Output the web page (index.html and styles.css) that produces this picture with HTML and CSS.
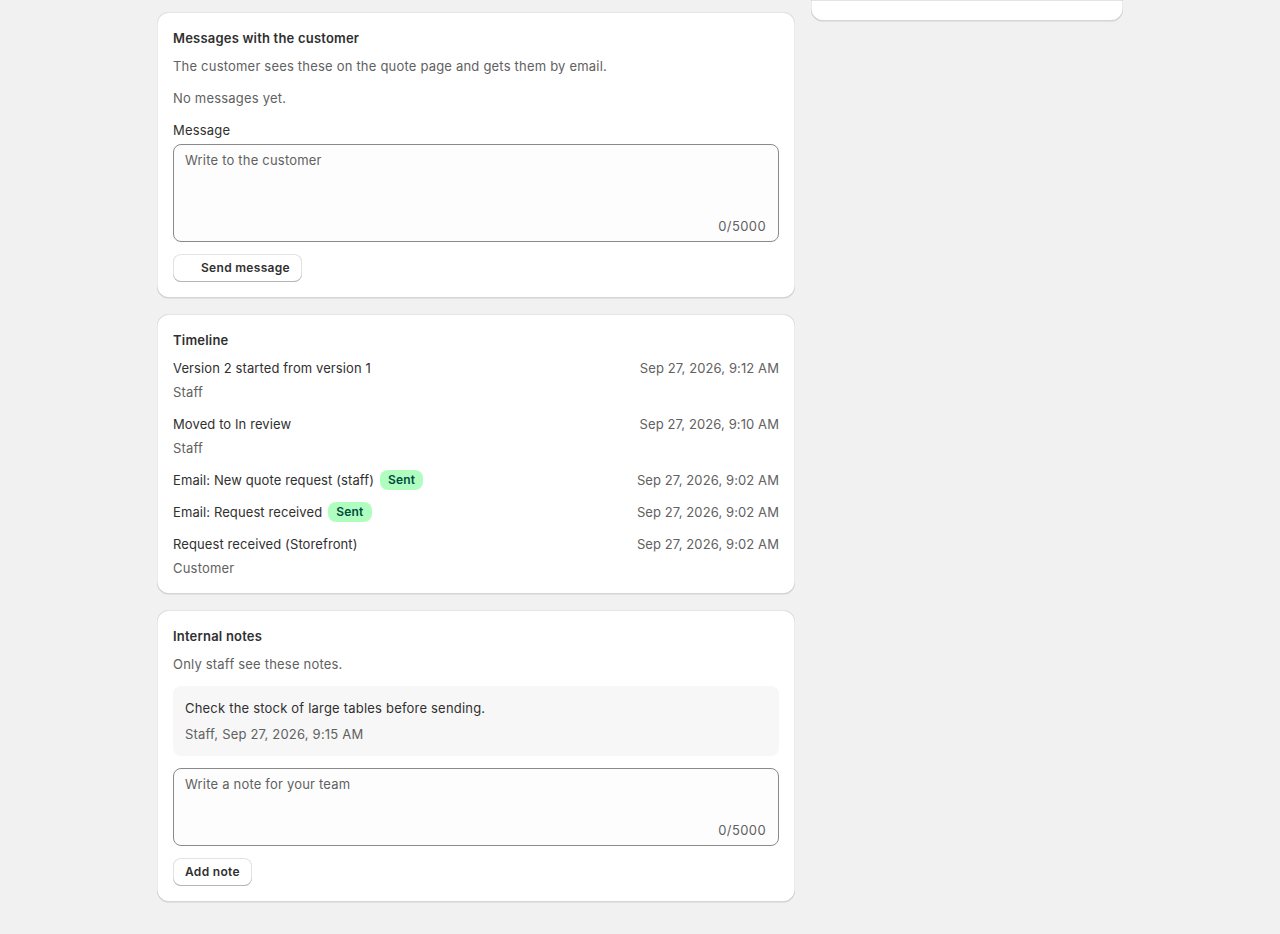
FILE: index.html
```html
<!DOCTYPE html>
<html lang="en">
<head>
<meta charset="utf-8">
<title>Quote</title>
<link rel="stylesheet" href="styles.css">
</head>
<body>
<div class="layout">
  <div class="main">
    <section class="card">
      <h2 class="card-title">Messages with the customer</h2>
      <p class="subdued">The customer sees these on the quote page and gets them by email.</p>
      <p class="subdued">No messages yet.</p>
      <div class="field">
        <label class="label" for="msg">Message</label>
        <div class="textarea tall">
          <textarea id="msg" placeholder="Write to the customer"></textarea>
          <div class="count">0/5000</div>
        </div>
      </div>
      <div><button class="btn btn-icon-space">Send message</button></div>
    </section>

    <section class="card">
      <h2 class="card-title">Timeline</h2>
      <ul class="timeline">
        <li class="event">
          <div class="event-row"><span class="event-title">Version 2 started from version 1</span><span class="event-date">Sep 27, 2026, 9:12 AM</span></div>
          <div class="event-actor">Staff</div>
        </li>
        <li class="event">
          <div class="event-row"><span class="event-title">Moved to In review</span><span class="event-date">Sep 27, 2026, 9:10 AM</span></div>
          <div class="event-actor">Staff</div>
        </li>
        <li class="event">
          <div class="event-row"><span class="event-title">Email: New quote request (staff) <span class="badge">Sent</span></span><span class="event-date">Sep 27, 2026, 9:02 AM</span></div>
        </li>
        <li class="event">
          <div class="event-row"><span class="event-title">Email: Request received <span class="badge">Sent</span></span><span class="event-date">Sep 27, 2026, 9:02 AM</span></div>
        </li>
        <li class="event">
          <div class="event-row"><span class="event-title">Request received (Storefront)</span><span class="event-date">Sep 27, 2026, 9:02 AM</span></div>
          <div class="event-actor">Customer</div>
        </li>
      </ul>
    </section>

    <section class="card">
      <h2 class="card-title">Internal notes</h2>
      <p class="subdued">Only staff see these notes.</p>
      <div class="note">
        <div class="note-text">Check the stock of large tables before sending.</div>
        <div class="note-meta">Staff, Sep 27, 2026, 9:15 AM</div>
      </div>
      <div class="textarea short">
        <textarea aria-label="Note" placeholder="Write a note for your team"></textarea>
        <div class="count">0/5000</div>
      </div>
      <div><button class="btn">Add note</button></div>
    </section>
  </div>
  <aside class="side">
    <div class="card card-tail"></div>
  </aside>
</div>
</body>
</html>
```

FILE: styles.css
```css
* { box-sizing: border-box; }
html, body { margin: 0; padding: 0; }
body {
  background: #f1f1f1;
  color: #303030;
  font-family: Inter, "Noto Sans", "Liberation Sans", sans-serif;
  font-size: 13px;
  line-height: 20px;
  letter-spacing: 0.2px;
}
.layout {
  width: 966px;
  margin: 0 auto;
  display: grid;
  grid-template-columns: 638px 312px;
  gap: 16px;
  align-items: start;
}
.main {
  padding-top: 12px;
  display: flex;
  flex-direction: column;
  gap: 16px;
  padding-bottom: 32px;
}
.card {
  background: #fff;
  border-radius: 12px;
  padding: 16px;
  display: flex;
  flex-direction: column;
  gap: 12px;
  box-shadow:
    inset 1px 0 0 rgba(0,0,0,.08),
    inset -1px 0 0 rgba(0,0,0,.08),
    inset 0 -1px 0 rgba(0,0,0,.16),
    inset 0 1px 0 rgba(204,204,204,.5),
    0 1px 0 rgba(26,26,26,.07);
}
.card-tail {
  height: 21px;
  padding: 0;
  border-radius: 0 0 12px 12px;
}
.card-title {
  margin: 0 0 -4px;
  font-size: 13px;
  line-height: 20px;
  font-weight: 600;
  color: #303030;
}
p { margin: 0; }
.subdued { color: #616161; }
.field { display: flex; flex-direction: column; gap: 4px; }
.label { color: #303030; }
.textarea {
  border: 1px solid #8a8a8a;
  border-radius: 8px;
  background: #fdfdfd;
  display: flex;
  flex-direction: column;
  padding: 5px 12px 5px 11px;
}
.textarea.tall { height: 98px; }
.textarea.short { height: 78px; }
.textarea textarea {
  flex: 1;
  border: 0;
  background: transparent;
  resize: none;
  padding: 0;
  margin: 0;
  font: inherit;
  letter-spacing: inherit;
  color: #303030;
  outline: none;
}
.textarea textarea::placeholder { color: #616161; opacity: 1; }
.count {
  text-align: right;
  color: #616161;
  line-height: 20px;
  letter-spacing: 0.4px;
}
.btn {
  height: 28px;
  padding: 0 12px;
  border: 0;
  border-radius: 8px;
  background: #fff;
  color: #303030;
  font: inherit;
  font-weight: 600;
  font-size: 12px;
  letter-spacing: 0.3px;
  cursor: pointer;
  box-shadow:
    inset 0 -1px 0 #b5b5b5,
    inset 0 0 0 1px #e3e3e3,
    inset 0 1px 0 #fff;
}
.btn-icon-space { padding-left: 28px; }
.timeline {
  list-style: none;
  margin: 0;
  padding: 0;
  display: flex;
  flex-direction: column;
  gap: 12px;
}
.event { display: flex; flex-direction: column; gap: 4px; }
.event-row {
  display: flex;
  justify-content: space-between;
  align-items: center;
  gap: 16px;
}
.event-title { color: #303030; display: flex; align-items: center; gap: 6px; letter-spacing: 0.1px; }
.event-date { color: #616161; white-space: nowrap; letter-spacing: 0.1px; }
.event-actor { color: #616161; }
.badge {
  display: inline-block;
  background: #affebf;
  color: #014b40;
  font-weight: 600;
  font-size: 12px;
  line-height: 16px;
  padding: 2px 8px;
  border-radius: 8px;
  letter-spacing: 0.2px;
}
.note {
  background: #f7f7f7;
  border-radius: 8px;
  padding: 12px;
  display: flex;
  flex-direction: column;
  gap: 6px;
}
.note-text { color: #303030; }
.note-meta { color: #616161; }
```
